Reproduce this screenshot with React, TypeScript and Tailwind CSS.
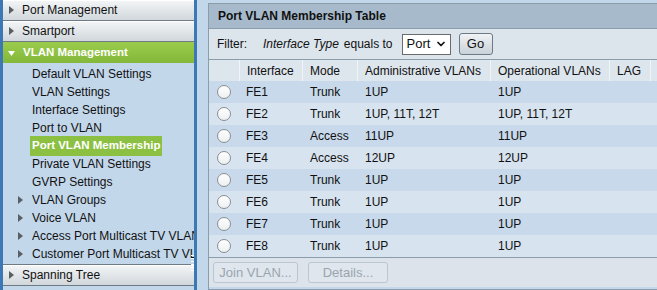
import { ChevronDown } from "lucide-react";

const subItems = [
  { label: "Default VLAN Settings" },
  { label: "VLAN Settings" },
  { label: "Interface Settings" },
  { label: "Port to VLAN" },
  { label: "Port VLAN Membership", active: true },
  { label: "Private VLAN Settings" },
  { label: "GVRP Settings" },
  { label: "VLAN Groups", arrow: true },
  { label: "Voice VLAN", arrow: true },
  { label: "Access Port Multicast TV VLAN", arrow: true },
  { label: "Customer Port Multicast TV VLAN", arrow: true },
];

const rows = [
  { port: "FE1", mode: "Trunk", admin: "1UP", oper: "1UP" },
  { port: "FE2", mode: "Trunk", admin: "1UP, 11T, 12T", oper: "1UP, 11T, 12T" },
  { port: "FE3", mode: "Access", admin: "11UP", oper: "11UP" },
  { port: "FE4", mode: "Access", admin: "12UP", oper: "12UP" },
  { port: "FE5", mode: "Trunk", admin: "1UP", oper: "1UP" },
  { port: "FE6", mode: "Trunk", admin: "1UP", oper: "1UP" },
  { port: "FE7", mode: "Trunk", admin: "1UP", oper: "1UP" },
  { port: "FE8", mode: "Trunk", admin: "1UP", oper: "1UP" },
];

const cols = "grid grid-cols-[30px_63px_55px_133px_119px_41px_80px]";

function RightArrow() {
  return (
    <svg width="5" height="8" viewBox="0 0 5 8" aria-hidden="true">
      <path d="M0 0 L5 4 L0 8 Z" fill="#5a5f63" />
    </svg>
  );
}

function MenuHeader({ label }: { label: string }) {
  return (
    <div className="flex h-[21px] items-center gap-[8px] border-b border-[#6f7b85] bg-gradient-to-b from-[#f4f6f7] to-[#d1d7dc] pl-[6px] shadow-[inset_0_1px_0_#ffffff]">
      <RightArrow />
      <span>{label}</span>
    </div>
  );
}

function Sidebar() {
  return (
    <aside className="relative flex h-full w-[197px] shrink-0 flex-col overflow-hidden border-l-[3px] border-r-[3px] border-[#3c78b3] bg-[#c3d7eb] text-[12px] text-[#111]">
      <MenuHeader label="Port Management" />
      <MenuHeader label="Smartport" />
      <div className="flex h-[21px] items-center gap-[8px] bg-gradient-to-b from-[#9acb4c] to-[#84b83a] pl-[5px] pt-px font-bold text-white">
        <svg width="7" height="5" viewBox="0 0 7 5" aria-hidden="true">
          <path d="M0 0 L7 0 L3.5 5 Z" fill="#ffffff" />
        </svg>
        <span className="text-[11.5px]">VLAN Management</span>
      </div>
      <ul className="flex flex-col pb-[1px] pt-[2px]">
        {subItems.map((item) => (
          <li key={item.label} className="flex h-[18px] items-center whitespace-nowrap">
            <span className="flex w-[27px] shrink-0 justify-end pr-[7px]">
              {item.arrow && <RightArrow />}
            </span>
            {item.active ? (
              <span className="bg-[#8cc043] px-[2px] py-[1px] text-[11.5px] font-bold text-white">{item.label}</span>
            ) : (
              <span className="px-[2px]">{item.label}</span>
            )}
          </li>
        ))}
      </ul>
      <div className="border-t border-[#6f7b85]">
        <MenuHeader label="Spanning Tree" />
      </div>
      <div className="absolute right-0 top-[255px] grid w-[3px] grid-cols-1 gap-[2px]">
        {[0, 1, 2, 3, 4, 5].map((i) => (
          <span key={i} className="h-[1px] w-[3px] bg-white" />
        ))}
      </div>
    </aside>
  );
}

function Radio() {
  return <span className="block h-[14px] w-[14px] rounded-full border border-[#8a8f94] bg-gradient-to-b from-[#ffffff] to-[#eceff1]" />;
}

function Panel() {
  return (
    <section className="w-[520px] shrink-0 border border-[#8b9cab] text-[12px] text-[#111]">
      <div className="flex h-[24px] items-center bg-[#a6bacb] pl-[9px] font-bold">Port VLAN Membership Table</div>
      <div className="flex h-[31px] items-center border-t border-[#8b9cab] bg-[#dce4ec] pl-[8px]">
        <span>Filter:</span>
        <span className="ml-[16px] italic">Interface Type</span>
        <span className="ml-[5px]">equals to</span>
        <span className="ml-[9px] flex h-[21px] w-[49px] items-center justify-between border border-[#6b6b6b] bg-white pl-[4px] pr-[3px] text-[13px]">
          Port
          <ChevronDown size={12} strokeWidth={3.5} />
        </span>
        <span className="ml-[8px] flex h-[22px] w-[34px] items-center justify-center rounded-[3px] border border-[#6d7a86] bg-gradient-to-b from-[#f1f3f5] to-[#c9d1d9] text-[13px]">
          Go
        </span>
      </div>
      <div className={`${cols} h-[22px] border-t border-[#8b9cab] bg-[#dde5ed]`}>
        {["", "Interface", "Mode", "Administrative VLANs", "Operational VLANs", "LAG", ""].map((h, i) => (
          <div key={i} className={`flex items-center pl-[7px] ${i > 0 ? "border-l border-[#f2f5f8]" : ""}`}>
            {h}
          </div>
        ))}
      </div>
      {rows.map((r, i) => (
        <div key={r.port} className={`${cols} h-[22px] ${i % 2 === 0 ? "bg-[#c7d9ea]" : "bg-[#d7e3ef]"}`}>
          <div className="flex items-center pl-[8px]">
            <Radio />
          </div>
          <div className="flex items-center pl-[7px]">{r.port}</div>
          <div className="flex items-center pl-[8px]">{r.mode}</div>
          <div className="flex items-center pl-[8px]">{r.admin}</div>
          <div className="flex items-center pl-[8px]">{r.oper}</div>
          <div />
          <div />
        </div>
      ))}
      <div className="flex h-[30px] items-center gap-[10px] border-t border-[#8b9cab] bg-[#dce3ea] pl-[4px]">
        <span className="flex h-[21px] w-[85px] items-center justify-center rounded-[3px] border border-[#bcc6cf] bg-[#dfe6ed] text-[13px] text-[#9ba5ae]">
          Join VLAN...
        </span>
        <span className="flex h-[21px] w-[80px] items-center justify-center rounded-[3px] border border-[#bcc6cf] bg-[#dfe6ed] text-[13px] text-[#9ba5ae]">
          Details...
        </span>
      </div>
    </section>
  );
}

export default function App() {
  return (
    <div className="flex h-[290px] w-[657px] overflow-hidden bg-[#c3d7eb] font-['Liberation_Sans',Arial,sans-serif]">
      <Sidebar />
      <main className="flex min-w-0 flex-1 overflow-hidden pl-[11px] pt-[3px]">
        <Panel />
      </main>
    </div>
  );
}
